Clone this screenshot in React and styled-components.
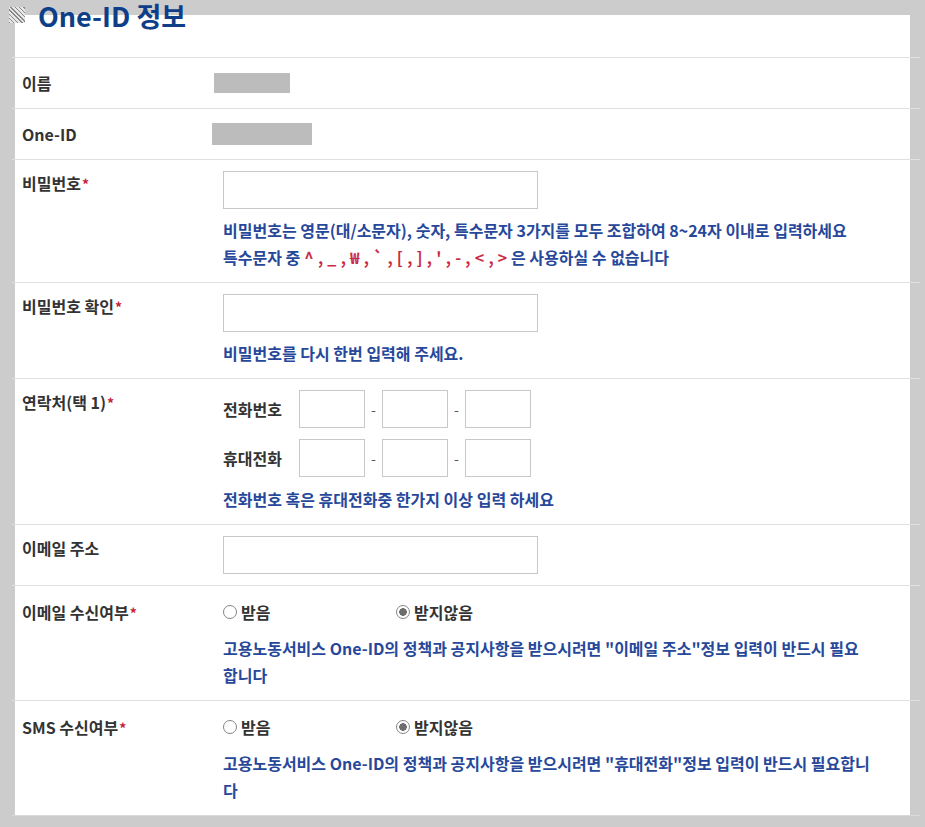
import React from "react";
import styled, { createGlobalStyle } from "styled-components";

const GlobalStyle = createGlobalStyle`
    html, body {
        margin: 0;
        padding: 0;
        background: #cccccc;
    }
    body {
        font-family: "Noto Sans CJK KR", "Noto Sans", sans-serif;
        color: #333;
    }
`;

const Page = styled.div`
    padding: 15px;
`;

const Panel = styled.div`
    background: #fff;
`;

const Header = styled.div`
    display: flow-root;
    height: 42px;
`;

const Title = styled.h2`
    display: flex;
    align-items: center;
    gap: 13px;
    margin: -15px 0 0 -6px;
    height: 30px;
    font-size: 27px;
    font-weight: 700;
    color: #0d3e87;
`;

const TitleMark = styled.span`
    width: 16px;
    height: 16px;
    flex: none;
    background: repeating-linear-gradient(45deg, #8a8a8a 0 1px, #e6e6e6 1px 3px);
`;

const Table = styled.div`
    margin: 0 -10px -4px -3px;
    border-bottom: 1px solid #d9d9d9;
`;

const Row = styled.div`
    display: grid;
    grid-template-columns: 211px 1fr;
    align-items: ${(p) => (p.$center ? "center" : "start")};
    padding: 11px 0;
    border-top: 1px solid #e0e0e0;
    min-height: ${(p) => (p.$center ? "28px" : "0")};
`;

const Label = styled.div`
    padding-left: 10px;
    font-size: 16px;
    font-weight: 700;
    color: #333;
    line-height: ${(p) => (p.$tall ? "30px" : "24px")};
`;

const Star = styled.span`
    color: #c8203a;
    font-size: 14px;
    margin-left: 1px;
`;

const Cell = styled.div`
    display: flex;
    flex-direction: column;
    align-items: flex-start;
`;

const Masked = styled.span`
    display: block;
    width: ${(p) => p.$w}px;
    height: ${(p) => p.$h}px;
    margin-left: ${(p) => p.$ml}px;
    background: #bcbcbc;
`;

const TextInput = styled.input`
    box-sizing: border-box;
    width: ${(p) => p.$w || 315}px;
    height: 38px;
    border: 1px solid #c8c8c8;
    padding: 0 8px;
    font: inherit;
    background: #fff;
    outline: none;
`;

const Help = styled.p`
    margin: ${(p) => p.$mt || 8}px 0 0;
    font-size: 16px;
    font-weight: 700;
    line-height: 27px;
    color: #27489a;
`;

const Red = styled.span`
    color: #cc2a44;
    word-spacing: 0.6px;
    margin-left: 4px;
`;

const PhoneLine = styled.div`
    display: flex;
    align-items: center;
    & + & {
        margin-top: 11px;
    }
`;

const SubLabel = styled.span`
    width: 76px;
    font-size: 16px;
    font-weight: 700;
    color: #333;
`;

const Dash = styled.span`
    width: 17px;
    text-align: center;
    font-size: 14px;
    color: #555;
`;

const RadioGroup = styled.div`
    display: flex;
    align-items: center;
    height: 30px;
`;

const Option = styled.label`
    display: flex;
    align-items: center;
    gap: 4px;
    min-width: 173px;
    font-size: 16px;
    font-weight: 700;
    color: #333;
`;

const Dot = styled.span`
    box-sizing: border-box;
    width: 14px;
    height: 14px;
    border-radius: 50%;
    border: 1px solid #858585;
    background: ${(p) => (p.$on ? "radial-gradient(circle, #6e6e6e 0 3.6px, #fff 4px)" : "#fff")};
`;

const Radio = ({ on, children }) => (
    <Option>
        <Dot $on={on} />
        {children}
    </Option>
);

const Phone = ({ label }) => (
    <PhoneLine>
        <SubLabel>{label}</SubLabel>
        <TextInput $w={66} />
        <Dash>-</Dash>
        <TextInput $w={66} />
        <Dash>-</Dash>
        <TextInput $w={66} />
    </PhoneLine>
);

export default function App() {
    return (
        <>
            <GlobalStyle />
            <Page>
                <Panel>
                    <Header>
                        <Title>
                            <TitleMark />
                            One-ID 정보
                        </Title>
                    </Header>
                    <Table>
                        <Row $center>
                            <Label>이름</Label>
                            <Cell><Masked $w={76} $h={20} $ml={-9} /></Cell>
                        </Row>
                        <Row $center>
                            <Label>One-ID</Label>
                            <Cell><Masked $w={100} $h={22} $ml={-11} /></Cell>
                        </Row>
                        <Row>
                            <Label>비밀번호<Star>*</Star></Label>
                            <Cell>
                                <TextInput type="password" />
                                <Help>
                                    비밀번호는 영문(대/소문자), 숫자, 특수문자 3가지를 모두 조합하여 8~24자 이내로 입력하세요
                                    <br />
                                    특수문자 중<Red>^ , _ , ₩ , ` , [ , ] , ' , - , &lt; , &gt;</Red> 은 사용하실 수 없습니다
                                </Help>
                            </Cell>
                        </Row>
                        <Row>
                            <Label>비밀번호 확인<Star>*</Star></Label>
                            <Cell>
                                <TextInput type="password" />
                                <Help>비밀번호를 다시 한번 입력해 주세요.</Help>
                            </Cell>
                        </Row>
                        <Row>
                            <Label>연락처(택 1)<Star>*</Star></Label>
                            <Cell>
                                <Phone label="전화번호" />
                                <Phone label="휴대전화" />
                                <Help $mt={9}>전화번호 혹은 휴대전화중 한가지 이상 입력 하세요</Help>
                            </Cell>
                        </Row>
                        <Row>
                            <Label>이메일 주소</Label>
                            <Cell>
                                <TextInput />
                            </Cell>
                        </Row>
                        <Row>
                            <Label $tall>이메일 수신여부<Star>*</Star></Label>
                            <Cell>
                                <RadioGroup>
                                    <Radio>받음</Radio>
                                    <Radio on>받지않음</Radio>
                                </RadioGroup>
                                <Help $mt={8}>
                                    고용노동서비스 One-ID의 정책과 공지사항을 받으시려면 "이메일 주소"정보 입력이 반드시 필요
                                    <br />
                                    합니다
                                </Help>
                            </Cell>
                        </Row>
                        <Row>
                            <Label $tall>SMS 수신여부<Star>*</Star></Label>
                            <Cell>
                                <RadioGroup>
                                    <Radio>받음</Radio>
                                    <Radio on>받지않음</Radio>
                                </RadioGroup>
                                <Help $mt={8}>
                                    고용노동서비스 One-ID의 정책과 공지사항을 받으시려면 "휴대전화"정보 입력이 반드시 필요합니
                                    <br />
                                    다
                                </Help>
                            </Cell>
                        </Row>
                    </Table>
                </Panel>
            </Page>
        </>
    );
}
